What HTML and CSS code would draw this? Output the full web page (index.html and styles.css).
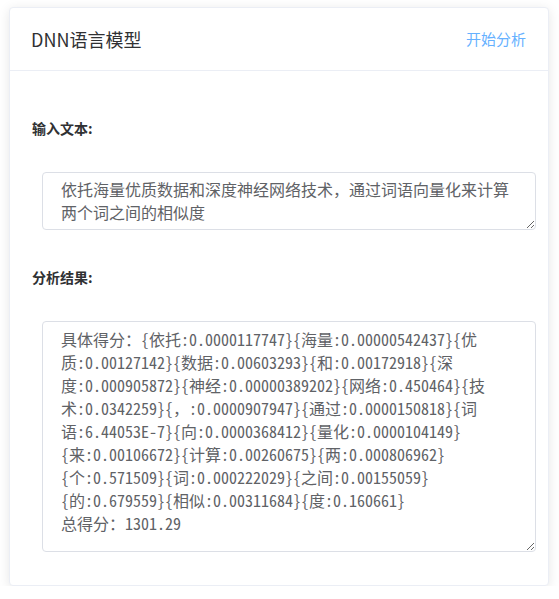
FILE: index.html
```html
<!DOCTYPE html>
<html lang="zh-CN">
<head>
<meta charset="utf-8">
<title>DNN语言模型</title>
<link rel="stylesheet" href="styles.css">
</head>
<body>
<div class="card">
  <div class="card-header">
    <span class="title">DNN语言模型</span>
    <button class="text-btn" type="button">开始分析</button>
  </div>
  <div class="card-body">
    <div class="form-label">输入文本:</div>
    <textarea class="input-area short">依托海量优质数据和深度神经网络技术，通过词语向量化来计算两个词之间的相似度</textarea>
    <div class="form-label second">分析结果:</div>
    <textarea class="input-area tall">具体得分：{依托:0.0000117747}{海量:0.00000542437}{优质:0.00127142}{数据:0.00603293}{和:0.00172918}{深度:0.000905872}{神经:0.00000389202}{网络:0.450464}{技术:0.0342259}{，:0.0000907947}{通过:0.0000150818}{词语:6.44053E-7}{向:0.0000368412}{量化:0.0000104149}{来:0.00106672}{计算:0.00260675}{两:0.000806962}{个:0.571509}{词:0.000222029}{之间:0.00155059}{的:0.679559}{相似:0.00311684}{度:0.160661}
总得分：1301.29</textarea>
  </div>
</div>
</body>
</html>
```
FILE: styles.css
```css
html, body {
  margin: 0;
  padding: 0;
  background: #ffffff;
}
body {
  padding: 7px 11px 0 9px;
  font-family: "Noto Sans CJK SC", "Liberation Sans", sans-serif;
  color: #303133;
}
.card {
  width: 540px;
  box-sizing: border-box;
  border: 1px solid #ebeef5;
  border-radius: 4px;
  background: #fff;
  box-shadow: 0 2px 12px 0 rgba(0, 0, 0, 0.1);
}
.card-header {
  display: flex;
  justify-content: space-between;
  align-items: center;
  padding: 18px 22px 18px 21px;
  height: 26px;
  border-bottom: 1px solid #ebeef5;
}
.title {
  font-size: 18px;
  line-height: 26px;
  color: #303133;
}
.text-btn {
  border: 0;
  background: transparent;
  padding: 0;
  font-family: "Noto Sans CJK SC", sans-serif;
  font-size: 15px;
  line-height: 20px;
  color: #66b1ff;
  cursor: pointer;
}
.card-body {
  padding: 37px 20px 33px 22px;
}
.form-label {
  font-size: 14px;
  font-weight: bold;
  line-height: 40px;
  height: 40px;
  color: #303133;
  margin-bottom: 24px;
}
.form-label.second {
  margin-top: 27px;
}
.input-area {
  display: block;
  margin-left: 10px;
  width: 494px;
  box-sizing: border-box;
  border: 1px solid #dcdfe6;
  border-radius: 4px;
  padding: 5px 15px 5px 18px;
  font-family: "Noto Sans Mono CJK SC", "Noto Sans CJK SC", "Liberation Mono", monospace;
  font-size: 16px;
  line-height: 23px;
  color: #606266;
  background: #fff;
  outline: none;
  overflow: hidden;
}
.input-area.short {
  height: 58px;
}
.input-area.tall {
  height: 231px;
  padding-top: 6px;
}
```
